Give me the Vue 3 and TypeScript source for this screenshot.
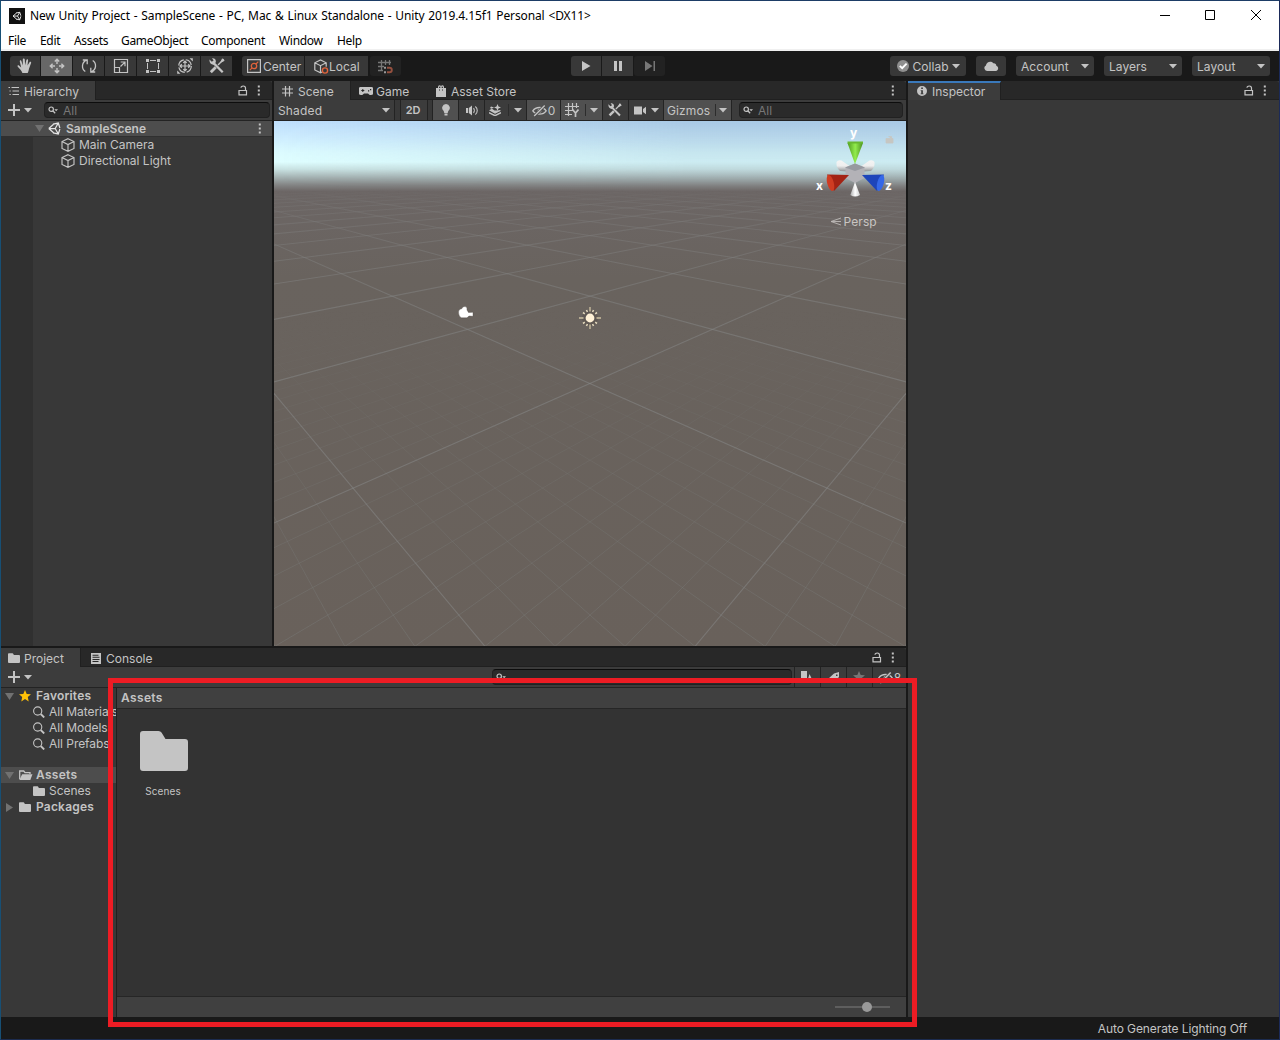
<script setup lang="ts">
import { h, type FunctionalComponent } from 'vue'

const glyphs: Record<string, string> = {
  unity: '<path d="M.8 6.500 5.600 2.300M.8 6.500l4.800 4.200M.8 6.500h6.400M7.200 6.500 10.200 1.300M7.200 6.500l3 5.200M5 2.200l5.300-1.100 1.600 4.900M5 10.800l5.300 1.100 1.600-4.900" fill="none" stroke="currentColor" stroke-width="1.250"/>',
  hand: '<path d="M5.400 15c-.5-1.600-2-3.400-3.300-4.700L.6 8.600C.1 7.700 1.300 7 2 7.500l2.200 1.900L2.800 3.500C2.600 2.200 4.100 1.900 4.400 3.100l1.400 4.300L5.800 1.400c0-1.200 1.900-1.200 2 0l.3 5.800 1.300-5.300c.3-1.200 1.900-.9 1.700.4l-.6 5.300 2-3.300c.6-1 2-.4 1.600.7l-2.100 5.700c-.3 1.800-.8 3.200-1.300 4.300z" fill="currentColor"/>',
  move: '<path d="M8 6V1.500M8 10v4.500M6 8H1.500M10 8h4.500M5.800 3.600 8 1.300l2.200 2.300M5.800 12.400 8 14.700l2.200-2.300M3.600 5.800 1.300 8l2.300 2.200M12.400 5.800 14.700 8l-2.300 2.200" fill="none" stroke="currentColor" stroke-width="1.400"/>',
  rotate: '<path d="M4.300 13.500C.2 10.700.5 4.300 5.600 2.200M1.800 2h4.400v4.200M11.700 2.500c4.100 2.800 3.800 9.200-1.300 11.300M14.200 14H9.800V9.800" fill="none" stroke="currentColor" stroke-width="1.300"/>',
  scale: '<path d="M1.500 1.500h13v13h-13zM1.500 9.500h5v5M7.500 8.500l4.200-4.200M7.700 4h4.300v4.300" fill="none" stroke="currentColor" stroke-width="1.200"/>',
  rect: '<path d="M5 2.500h6M5 13.500h6M2.500 5v6M13.500 5v6" fill="none" stroke="currentColor" stroke-width="1"/><path d="M1 1h3v3H1zM12 1h3v3h-3zM1 12h3v3H1zM12 12h3v3h-3z" fill="currentColor"/>',
  transform: '<circle cx="8" cy="8" r="6.300" fill="none" stroke="currentColor" stroke-width="1.200" stroke-dasharray="7.900 2"/><path d="M8 3v10M3 8h10M6.300 4.800 8 3l1.700 1.800M6.300 11.200 8 13l1.700-1.800M4.800 6.300 3 8l1.800 1.700M11.200 6.300 13 8l-1.800 1.700" fill="none" stroke="currentColor" stroke-width="1.200"/><path d="M12.500.2h3.300v3.300zM.2 12.500v3.300h3.300z" fill="currentColor"/>',
  tools: '<path d="M3.900 4.400 13.700 14.300" stroke="currentColor" stroke-width="2.300"/><path d="M.5 1.400l2.300 2.300L4.600 2.500 3 .3c2.300-.4 4.200 1 3.800 3.900L4.700 6.700C2.200 7 0 4.400.5 1.400z" fill="currentColor"/><path d="M14.700 1.200 9 6.900" stroke="currentColor" stroke-width="1.400"/><path d="M6.700 9.300 1.800 14.200" stroke="currentColor" stroke-width="2.800"/><path d="M13.200.3l2.500 2.500-3.300 1.800-.9-.9z" fill="currentColor"/>',
  center: '<path d="M.6.600h12.800v12.800H.6z" fill="none" stroke="currentColor" stroke-width="1.200"/><circle cx="7" cy="7" r="2.700" fill="none" stroke="#e0633c" stroke-width="1.300"/><path d="m2.800 11.200 2.300-2.300M9 5l2.300-2.300" stroke="#e0633c" stroke-width="1.200"/>',
  cube: '<path d="M7 .7 13 3.500v7L7 13.300 1 10.500v-7zM1 3.500l6 3 6-3M7 6.500v6.800" fill="none" stroke="currentColor" stroke-width="1.150"/>',
  local: '<path d="M8 13 6.500 13.800.8 11V3.800L6.500 1l5.700 2.800v4M.8 3.800l5.700 2.900 5.700-2.900M6.500 6.700v7" fill="none" stroke="currentColor" stroke-width="1.200"/><circle cx="11" cy="11.500" r="2.600" fill="none" stroke="#e0633c" stroke-width="1.400"/>',
  snap: '<path d="M3.500 1v11M7.500 1v5M11.500 1v5M0 3.500h13M0 7.500h6M0 11.500h5" fill="none" stroke="#777" stroke-width="1.300"/><path d="M9 8.700h2.500a2.300 2.300 0 0 1 0 4.600H9" fill="none" stroke="#95503f" stroke-width="1.900"/><path d="M6 7.700h2v2H6zM6 12.300h2v2H6z" fill="#999"/>',
  list: '<path d="M3.500 1.500H11M4.500 5H11M4.500 8.500H11" stroke="currentColor" stroke-width="1.200"/><path d="M.5 1.500H2M1.500 5h1.200M1.500 8.500h1.200" stroke="currentColor" stroke-width="1.200"/>',
  lock: '<path d="M1 5.500h7.500v4.300H1zM7.500 5.500V3c0-2.600-4.500-2.600-4.500-.3" fill="none" stroke="currentColor" stroke-width="1.200"/>',
  dots: '<path d="M.8.5h2v2h-2zM.8 4.500h2v2h-2zM.8 8.500h2v2h-2z" fill="currentColor"/>',
  search: '<circle cx="3.200" cy="3.200" r="2.200" fill="none" stroke="currentColor" stroke-width="1.200"/><path d="m4.800 4.800 2.400 2.400" stroke="currentColor" stroke-width="1.300"/><path d="M6.300 3.200H10L8.150 5.200z" fill="currentColor"/>',
  lens: '<circle cx="4.700" cy="5" r="4.100" fill="none" stroke="currentColor" stroke-width="1.100"/><path d="m7.700 8 3.500 3.500" stroke="currentColor" stroke-width="1.800"/>',
  grid: '<path d="M3.500 0v10.500M7.500 0v10.500M0 3H11M0 7H11" stroke="currentColor" stroke-width="1.200"/>',
  pad: '<path fill-rule="evenodd" d="M3.500 0h7a3.500 3.500 0 0 1 1.500 8c-1.500.5-2.200-.8-3-1.500H5C4.200 7.200 3.500 8.500 2 8A3.900 3.900 0 0 1 3.500 0zM3.300 1.900v1H2.300v1h1v1h1v-1h1v-1h-1v-1zM9 3.200h1.200v1.200H9zM11 2h1.200v1.200H11z" fill="currentColor"/>',
  bag: '<path fill-rule="evenodd" d="M0 3h2V2.500C2 1.200 2.700.3 3.500.3c.7 0 1 .2 1.500.6.500-.4.800-.6 1.500-.6C7.300.3 8 1.200 8 2.500V3h2v9H0zM3 3h1.300V1.500C3.500 1.300 3 2 3 3zm2.700 0H7c0-1-.5-1.700-1.300-1.500zM3 4.500v1h1v-1zm3 0v1h1v-1z" fill="currentColor"/>',
  info: '<path fill-rule="evenodd" d="M5 0a5 5 0 1 0 0 10A5 5 0 0 0 5 0zM4.200 1.600h1.700v1.500H4.200zM3.700 4.200h2.200v3.200h.6v.9H3.600v-.9h.6V5h-.5z" fill="currentColor"/>',
  bulb: '<path d="M4 0a3.900 3.900 0 0 1 2.300 7L5.700 9H2.300l-.6-2A3.900 3.900 0 0 1 4 0zM2.500 9.500h3v2h-3z" fill="currentColor"/>',
  audio: '<path d="M0 3h2v5H0zM2.800 3 6 .5v10L2.800 8z" fill="currentColor"/><path d="M7.500 3.200c1.100 1.200 1.100 3.400 0 4.600M9.300 1.500c2.600 2 2.600 6 0 8" fill="none" stroke="currentColor" stroke-width="1.100"/>',
  fx: '<path d="M0 6.200l3-1.400 2.500 1.700 3.200.1L10.500 6l1.500.8L6 9.700z" fill="currentColor"/><path d="m0 8.700 6 3 6-3" fill="none" stroke="currentColor" stroke-width="1.400"/><path d="m8.500 0 1 2.600 2.500.9-2.500 1-1 2.500-1-2.500-2.500-1 2.500-.9zM2 2.500l3 1-2.500 1.300L1 4z" fill="currentColor"/>',
  hidden: '<path d="M.8 6.800C3.800 2.400 11.200 2.400 14.200 6.800 11.200 11.200 3.800 11.200.8 6.800z" fill="none" stroke="currentColor" stroke-width="1.300"/><circle cx="7.500" cy="6.800" r="2" fill="currentColor"/><path d="M2.200 12 12.700 1.500" stroke="#4a4a4a" stroke-width="3"/><path d="M2.200 12 12.700 1.500" stroke="currentColor" stroke-width="1.400"/>',
  gridy: '<path d="M3.500 0v13M7.500 0v8M11.500 0v5M0 3.500h14M0 7.500h7M0 11.500h7" fill="none" stroke="currentColor" stroke-width="1.200"/><path d="M7.500 6.500 10.500 10l3-3.500M10.500 9.500V14" fill="none" stroke="currentColor" stroke-width="1.700"/>',
  camera: '<path d="M0 .5h8v8H0zM9 3l3-2.300v7.600L9 6z" fill="currentColor"/>',
  folder: '<path d="M0 1.200Q0 .3.800.3h3.700q.6 0 .8.600l.6 1.200H11q1 0 1 1v5.800q0 1-1 1H1q-1 0-1-1z" fill="currentColor"/>',
  open: '<path d="M.7 9V1h4l1.300 1.700h5V4" fill="none" stroke="currentColor" stroke-width="1.300"/><path d="M3.200 4.200h10.300L11.300 10H.3z" fill="currentColor"/>',
  star: '<path d="m6 0 1.700 3.900 4.300.4-3.200 2.800.9 4.300L6 9.100l-3.700 2.300.9-4.300L0 4.300l4.300-.4z" fill="currentColor"/>',
  console: '<path fill-rule="evenodd" d="M0 0h10v11H0zM1.500 1.700v1h6v-1zM1.500 3.800v1h7v-1zM1.500 5.900v1h7v-1zM1.500 8v1h6V8z" fill="currentColor"/>',
  check: '<circle cx="6" cy="6" r="6" fill="#8f8f8f"/><path d="m2.800 5.800 2.400 2.400L9.600 3.600" fill="none" stroke="#fff" stroke-width="1.900"/>',
  cloud: '<path d="M3 10A3 3 0 0 1 1.900 4.400C2.400 1 6.900-.9 9.300 2.200c2-.3 3.200 1 3 2.600C15 5.500 14.700 10 11.700 10z" fill="currentColor"/>',
  play: '<path d="M0 0v10l8.500-5z" fill="currentColor"/>',
  pause: '<path d="M0 0h3v10H0zM5 0h3v10H5z" fill="currentColor"/>',
  step: '<path d="M0 0v10l7.500-5zM8.500 0H10v10H8.500z" fill="currentColor"/>',
  plus: '<path d="M6 0v12M0 6h12" stroke="currentColor" stroke-width="2"/>',
  down: '<path d="M0 0h8L4 4.500z" fill="currentColor"/>',
  fold: '<path d="M0 0h9L4.500 7z" fill="currentColor"/>',
  foldr: '<path d="M0 0v9l7-4.500z" fill="currentColor"/>',
  shapes: '<path d="M0 0h6v7H0zM8.500 3l4 8.500H6z" fill="currentColor"/><circle cx="3" cy="9" r="3" fill="currentColor"/>',
  tag: '<path fill-rule="evenodd" d="M0 7 6 1.500 11 0v5L5 11zM8 2.500V4h1.500V2.500z" fill="currentColor"/>',
}

const Ic: FunctionalComponent<{ n: string; w: number; h: number; vw?: number; vh?: number }> = (p) =>
  h('svg', {
    width: p.w,
    height: p.h,
    viewBox: `0 0 ${p.vw ?? p.w} ${p.vh ?? p.h}`,
    style: 'display:block;flex:none',
    innerHTML: glyphs[p.n],
  })
Ic.props = ['n', 'w', 'h', 'vw', 'vh']

const menus = [
  ['File', 32], ['Edit', 34], ['Assets', 47], ['GameObject', 80], ['Component', 78], ['Window', 58], ['Help', 30],
] as const
const tools = ['hand', 'move', 'rotate', 'scale', 'rect', 'transform', 'tools']

/* Ground grid: two families of lines converging at symmetric vanishing points. */
const HORIZON = 36
const MID = 316
const SPREAD = 513
const BASE = 0.004415
const STEP = 0.00277
interface Seg { x1: number; y1: number; x2: number; y2: number }
function family(n: number): Seg[] {
  const inv = BASE + n * (n < 0 ? 0.00279 : STEP)
  const slope = 1 / inv / SPREAD
  const far = MID + SPREAD + 400
  const y2 = HORIZON + slope * (far - MID + SPREAD)
  return [
    { x1: MID - SPREAD, y1: HORIZON, x2: far, y2 },
    { x1: MID + SPREAD, y1: HORIZON, x2: 2 * MID - far, y2 },
  ]
}
const major: Seg[] = []
for (let i = -1; i < 22; i++) major.push(...family(i))
const minor: Seg[] = []
for (let i = -15; i < 34; i++) if (i % 10 !== 0) minor.push(...family(i / 10))
</script>

<template>
  <div class="win">
    <header class="title">
      <svg class="logo" width="16" height="16" viewBox="0 0 16 16"><rect width="16" height="16" fill="#111" /><g transform="translate(3.500 3.500) scale(.7)" color="#fff" v-html="glyphs.unity" /></svg>
      <span class="caption">New Unity Project - SampleScene - PC, Mac &amp; Linux Standalone - Unity 2019.4.15f1 Personal &lt;DX11&gt;</span>
      <svg class="winbtns" width="102" height="12" viewBox="0 0 102 12" fill="none" stroke="#000"><path d="M0 5.500h10M45.500.5h9v9h-9zM91 0l10 10M101 0 91 10" /></svg>
    </header>
    <nav class="menu"><span v-for="m in menus" :key="m[0]" :style="{ width: m[1] + 'px' }">{{ m[0] }}</span></nav>

    <div class="toolbar">
      <div class="group tools">
        <button v-for="t in tools" :key="t" :class="{ on: t === 'move' }"><Ic :n="t" :w="16" :h="16" /></button>
      </div>
      <div class="group pivot">
        <button class="pv"><Ic n="center" :w="14" :h="14" /><span>Center</span></button>
        <button class="pv loc"><Ic n="local" :w="15" :h="15" /><span>Local</span></button>
        <button class="dim"><Ic n="snap" :w="15" :h="15" /></button>
      </div>
      <div class="group playbar">
        <button><Ic n="play" :w="9" :h="10" /></button>
        <button><Ic n="pause" :w="8" :h="10" /></button>
        <button class="dim"><Ic n="step" :w="10" :h="10" /></button>
      </div>
      <div class="services">
        <button class="collab"><Ic n="check" :w="12" :h="12" /><span>Collab</span><Ic n="down" :w="8" :h="5" /></button>
        <button class="cloud"><Ic n="cloud" :w="15" :h="10" /></button>
        <button v-for="d in ['Account', 'Layers', 'Layout']" :key="d" class="drop"><span>{{ d }}</span><Ic n="down" :w="8" :h="5" /></button>
      </div>
    </div>

    <main>
      <div class="left">
        <div class="upper">
          <section class="hier">
            <div class="tabs">
              <div class="tab act" style="width: 95px"><Ic class="hi" n="list" :w="12" :h="10" /><span>Hierarchy</span></div>
              <div class="ends"><Ic n="lock" :w="10" :h="11" /><Ic n="dots" :w="4" :h="11" /></div>
            </div>
            <div class="bar">
              <span class="plus"><Ic n="plus" :w="12" :h="12" /><Ic n="down" :w="8" :h="5" /></span>
              <div class="search hs"><Ic n="search" :w="10" :h="8" /><span>All</span></div>
            </div>
            <div class="tree">
              <div class="scene-row"><Ic class="tri" n="fold" :w="9" :h="7" /><Ic class="white" n="unity" :w="13" :h="13" /><b>SampleScene</b><Ic class="more" n="dots" :w="4" :h="11" /></div>
              <div class="objs">
                <div v-for="o in ['Main Camera', 'Directional Light']" :key="o" class="obj"><Ic n="cube" :w="14" :h="14" /><span>{{ o }}</span></div>
              </div>
            </div>
          </section>

          <section class="scene">
            <div class="tabs">
              <div class="tab act" style="width: 77px"><Ic n="grid" :w="11" :h="11" /><span>Scene</span></div>
              <div class="tab" style="width: 77px"><Ic n="pad" :w="14" :h="8" /><span class="t3">Game</span></div>
              <div class="tab"><Ic n="bag" :w="10" :h="12" /><span>Asset Store</span></div>
              <div class="ends"><Ic n="dots" :w="4" :h="11" /></div>
            </div>
            <div class="bar sbar">
              <span class="c shaded"><span>Shaded</span><Ic n="down" :w="8" :h="5" /></span>
              <span class="c gap" style="width: 6px" />
              <span class="c twod" style="width: 27px"><b>2D</b></span>
              <span class="c gap" style="width: 5px" />
              <span class="c on" style="width: 26px"><Ic n="bulb" :w="8" :h="12" /></span>
              <span class="c" style="width: 26px"><Ic n="audio" :w="12" :h="11" /></span>
              <span class="c split" style="width: 42px"><Ic n="fx" :w="12" :h="12" /><i /><Ic n="down" :w="8" :h="5" /></span>
              <span class="c on" style="width: 34px; gap: 1px"><Ic n="hidden" :w="15" :h="13" /><span>0</span></span>
              <span class="c split on" style="width: 42px"><Ic n="gridy" :w="14" :h="14" /><i /><Ic n="down" :w="8" :h="5" /></span>
              <span class="c wr" style="width: 26px"><Ic n="tools" :w="14" :h="14" :vw="16" :vh="16" /></span>
              <span class="c" style="width: 35px; gap: 4px"><Ic n="camera" :w="13" :h="9" /><Ic n="down" :w="8" :h="5" /></span>
              <span class="c split on giz" style="width: 69px"><span>Gizmos</span><i /><Ic n="down" :w="8" :h="5" /></span>
              <div class="search ss"><Ic n="search" :w="10" :h="8" /><span>All</span></div>
            </div>
            <svg class="view" width="632" height="525" viewBox="0 0 632 525">
              <defs>
                <linearGradient id="sky" x1="0" y1="0" x2="0" y2="1">
                  <stop offset="0" stop-color="#bfdffd" /><stop offset=".033" stop-color="#cfeeff" /><stop offset=".06" stop-color="#dcfbff" /><stop offset=".078" stop-color="#dffeff" /><stop offset=".092" stop-color="#c9e2e2" /><stop offset=".107" stop-color="#a5b3b3" /><stop offset=".122" stop-color="#838484" /><stop offset=".134" stop-color="#6c6665" /><stop offset=".3" stop-color="#69635e" /><stop offset="1" stop-color="#69615b" />
                </linearGradient>
                <linearGradient id="tint" x1="0" y1="0" x2="1" y2="0">
                  <stop offset="0" stop-color="#88a8c0" stop-opacity="0" /><stop offset=".65" stop-color="#88a8c0" stop-opacity=".4" /><stop offset="1" stop-color="#88a8c0" stop-opacity=".4" />
                </linearGradient>
                <linearGradient id="down" x1="0" y1="0" x2="0" y2="1"><stop offset="0" stop-color="#fff" /><stop offset=".6" stop-color="#888" /><stop offset="1" stop-color="#000" /></linearGradient>
                <mask id="mt"><rect width="632" height="67" fill="url(#down)" /></mask>
                <linearGradient id="fa" gradientUnits="userSpaceOnUse" x1="0" y1="0" x2="0" y2="525">
                  <stop offset=".13" stop-color="#000" /><stop offset=".16" stop-color="#666" /><stop offset=".22" stop-color="#999" /><stop offset=".34" stop-color="#ddd" /><stop offset=".5" stop-color="#fff" /><stop offset="1" stop-color="#fff" />
                </linearGradient>
                <linearGradient id="fi" gradientUnits="userSpaceOnUse" x1="0" y1="0" x2="0" y2="525">
                  <stop offset=".36" stop-color="#000" /><stop offset=".6" stop-color="#777" /><stop offset="1" stop-color="#fff" />
                </linearGradient>
                <mask id="ma" maskUnits="userSpaceOnUse" x="0" y="0" width="632" height="525"><rect width="632" height="525" fill="url(#fa)" /></mask>
                <mask id="mi" maskUnits="userSpaceOnUse" x="0" y="0" width="632" height="525"><rect width="632" height="525" fill="url(#fi)" /></mask>
                <linearGradient id="cy"><stop offset="0" stop-color="#4f9b20" /><stop offset=".5" stop-color="#92ec4c" /><stop offset="1" stop-color="#4b8f22" /></linearGradient>
                <linearGradient id="cw"><stop offset="0" stop-color="#aaa" /><stop offset=".5" stop-color="#fff" /><stop offset="1" stop-color="#ccc" /></linearGradient>
                <linearGradient id="cs" x1="0" y1="0" x2="0" y2="1"><stop offset="0" stop-color="#f4f4f4" /><stop offset=".5" stop-color="#eee" /><stop offset="1" stop-color="#8f9294" /></linearGradient>
              </defs>
              <rect width="632" height="525" fill="url(#sky)" />
              <rect width="632" height="67" fill="url(#tint)" mask="url(#mt)" />
              <g mask="url(#mi)" stroke="#7b7f7c" stroke-opacity=".42" stroke-width="1"><line v-for="(s, i) in minor" :key="i" v-bind="s" /></g>
              <g mask="url(#ma)" stroke="#8a8c8b" stroke-opacity=".5" stroke-width="1.100"><line v-for="(s, i) in major" :key="i" v-bind="s" /></g>
              <!-- camera gizmo -->
              <path d="M184.500 191q0-3 3.500-3.500.5-2.300 3-2 2.500.3 2 3.500l1.500 2.500 4.500-.2v4l-4-.3-2 1.800h-5.500q-3-1-3-5.800z" fill="#fff" stroke="#45403c" stroke-opacity=".45" stroke-width=".8" />
              <!-- directional light gizmo -->
              <g transform="translate(316 197)">
                <circle r="8" fill="#4c463f" fill-opacity=".35" /><circle r="4.400" fill="#fff1d6" />
                <g stroke="#b3a88f" stroke-width="1.800"><path d="M0-11v4.500M0 6.500V11M-11 0h4.500M6.500 0H11" /><path d="m-7-5.500 1.800 1.300M7-5.500 5.200-4.200M-7 5.500l1.800-1.300M7 5.500 5.200 4.200M-3.500-8l.9 2M3.500-8l-.9 2M-3.500 8l.9-2M3.500 8l-.9-2" stroke="#e0d5ba" stroke-width="1.600" /></g>
              </g>
              <!-- orientation gizmo -->
              <path d="M562.500 41q1.500-2.500 5-1.500l8 5.500-2 5.500-7.500-.5q-4-3-3.500-9z" fill="url(#cs)" /><path d="M600.500 41q-1.500-2.500-5-1.500l-8 5.500 2 5.500 7.500-.5q4-3 3.500-9z" fill="url(#cs)" />
              <path d="m581 42.500 9.500 4V57l-9.500 5-9.500-5V46.500z" fill="#b3b2b7" /><path d="m581 42.500 10 4-10 3.500-10-3.500z" fill="#9799a0" />
              <path d="m573.500 22 7.500 21 8-21z" fill="url(#cy)" /><path d="M573.500 20.500h15.500v2h-15.500z" fill="#67b82f" />
              <path d="m581 61-4.700 13q4.700 3 9.700 0z" fill="url(#cw)" />
              <path d="m575 54-22-.5 7 16.500z" fill="#a32314" /><ellipse cx="556.500" cy="62" rx="3.300" ry="8.200" transform="rotate(-15 556.500 62)" fill="#cf3c22" />
              <path d="m588 54 22-.5-7 16.500z" fill="#1d45ba" /><ellipse cx="606.500" cy="62" rx="3.300" ry="8.200" transform="rotate(15 606.500 62)" fill="#3568e8" />
              <g class="axis"><text x="576" y="16">y</text><text x="542" y="69">x</text><text x="611" y="69">z</text></g>
              <path d="M612 17.500h7v4.500h-7zM617.500 18v-2.500h-3" fill="#c6c6c2" stroke="#c6c6c2" stroke-width=".8" />
              <path d="M567 97 557 100.500l10 3.500M557 100.500h10" fill="none" stroke="#bdbab8" stroke-width=".9" />
              <text class="persp" x="569.500" y="105">Persp</text>
            </svg>
          </section>
        </div>

        <section class="project">
          <div class="tabs">
            <div class="tab act" style="width: 80px"><Ic n="folder" :w="12" :h="10" /><span class="t4">Project</span></div>
            <div class="tab con"><Ic n="console" :w="10" :h="11" /><span>Console</span></div>
            <div class="ends"><Ic n="lock" :w="10" :h="11" /><Ic n="dots" :w="4" :h="11" /></div>
          </div>
          <div class="bar pbar">
            <span class="plus"><Ic n="plus" :w="12" :h="12" /><Ic n="down" :w="8" :h="5" /></span>
            <div class="search ps"><Ic n="search" :w="10" :h="8" /></div>
            <span class="c" style="width: 26px"><Ic n="shapes" :w="13" :h="12" /></span>
            <span class="c" style="width: 26px"><Ic n="tag" :w="11" :h="11" /></span>
            <span class="c grey" style="width: 26px"><Ic n="star" :w="12" :h="12" /></span>
            <span class="c" style="width: 34px; gap: 1px"><Ic n="hidden" :w="15" :h="13" /><span>8</span></span>
          </div>
          <div class="pbody">
            <div class="ptree">
              <div class="row"><Ic class="tri" n="fold" :w="9" :h="7" /><Ic class="gold" n="star" :w="12" :h="12" /><b>Favorites</b></div>
              <div v-for="f in ['All Materials', 'All Models', 'All Prefabs']" :key="f" class="row sub"><Ic n="lens" :w="12" :h="12" /><span>{{ f }}</span></div>
              <div class="row sel"><Ic class="tri" n="fold" :w="9" :h="7" /><Ic n="open" :w="14" :h="11" /><b>Assets</b></div>
              <div class="row sub"><Ic n="folder" :w="12" :h="10" /><span>Scenes</span></div>
              <div class="row pk"><Ic class="tri" n="foldr" :w="7" :h="9" /><Ic n="folder" :w="12" :h="10" /><b>Packages</b></div>
            </div>
            <div class="assets">
              <div class="crumb"><b>Assets</b></div>
              <div class="items">
                <div class="item">
                  <svg width="48" height="40" viewBox="0 0 48 40"><path d="M0 3q0-3 3-3h15.500q2 0 3 1.500L25.500 8H45q3 0 3 3v26q0 3-3 3H3q-3 0-3-3z" fill="#c4c4c4" /></svg>
                  <span>Scenes</span>
                </div>
              </div>
              <div class="foot"><div class="slider"><i /></div></div>
            </div>
          </div>
        </section>
      </div>

      <section class="insp">
        <div class="tabs">
          <div class="tab act blue" style="width: 93px"><Ic n="info" :w="10" :h="10" /><span>Inspector</span></div>
          <div class="ends"><Ic n="lock" :w="10" :h="11" /><Ic n="dots" :w="4" :h="11" /></div>
        </div>
      </section>
    </main>
    <footer class="status"><span>Auto Generate Lighting Off</span></footer>
    <div class="frame" />
  </div>
</template>

<style>
body { margin: 0; background: #191919; }
</style>
<style scoped>
* { box-sizing: border-box; }
.win { position: relative; width: 1280px; height: 1040px; display: flex; flex-direction: column; border: 1px solid; border-color: #1d3d66 #1b2a59 #1c2c50 #174f74; background: #191919; font: 12px/16px Inter, sans-serif; letter-spacing: 0; color: #c4c4c4; overflow: hidden; white-space: nowrap; }
.title { height: 29px; flex: none; display: flex; align-items: center; background: #fff; color: #000; padding-left: 8px; }
.caption { margin-left: 5px; font: 12px/16px "Noto Sans", "Noto Sans CJK KR", sans-serif; letter-spacing: -.12px; word-spacing: .85px; }
.winbtns { margin-left: auto; margin-right: 17px; }
.menu { height: 21px; flex: none; display: flex; padding-left: 7px; background: #fff; color: #000; border-bottom: 2px solid #f0f0f0; font: 12px/22px "Noto Sans", sans-serif; letter-spacing: -.3px; }
.menu span { flex: none; }
.toolbar { height: 30px; flex: none; display: flex; padding: 5px 9px 5px 9px; }
button { font: inherit; letter-spacing: inherit; color: inherit; border: 0; margin: 0; padding: 0; height: 20px; background: #383838; display: flex; align-items: center; justify-content: center; }
button span { padding-top: 2px; }
.group { display: flex; gap: 1px; }
.group button { width: 31px; }
.group button:first-child { border-radius: 3px 0 0 3px; }
.tools button:first-child, .playbar button:first-child { width: 30px; }
.tools button.on { background: #676767; }
.pivot { margin-left: 10px; }
.group button.pv { width: 62px; justify-content: flex-start; padding-left: 5px; gap: 2px; letter-spacing: 0; }
.group button.loc { width: 63px; padding-left: 9px; gap: 0; }
.group button.dim { background: #222; border-radius: 3px; color: #777; }
.pivot .dim { margin-left: 1px; }
.playbar { margin-left: 170px; }
.services { margin-left: auto; display: flex; gap: 10px; letter-spacing: .05px; }
.services button { border-radius: 3px; }
.collab { width: 76px; gap: 3px; padding-left: 1px; }
.cloud { width: 30px; }
.services .drop { width: 78px; justify-content: space-between; padding: 0 5px; }
main { display: flex; gap: 2px; height: 936px; flex: none; }
.left { width: 905px; display: flex; flex-direction: column; gap: 2px; }
.upper { display: flex; gap: 2px; height: 565px; flex: none; }
.hier { width: 271px; background: #383838; display: flex; flex-direction: column; }
.scene { width: 632px; display: flex; flex-direction: column; background: #3c3c3c; }
.insp { width: 371px; background: #383838; }
.tabs { height: 19px; flex: none; display: flex; background: #282828; border-bottom: 1px solid #202020; border-radius: 3px 3px 0 0; }
.tab { display: flex; align-items: center; padding: 3px 0 0 8px; gap: 5px; height: 19px; }
.tab > svg { position: relative; top: -1px; }
.tab.act { background: #3c3c3c; border-right: 1px solid #202020; }
.tab.blue { border-top: 2px solid #3a79bb; padding-top: 1px; padding-left: 9px; }
.hier .tab.act { padding-left: 7px; }
.hi { margin-right: -1px; }
.t3 { margin-left: -2px; }
.t4 { margin-left: -1px; }
.project .tab.act { padding-left: 7px; }
.con { padding-left: 10px; }
.ends { margin-left: auto; margin-right: 11px; display: flex; align-items: center; gap: 9px; }
.insp .ends { margin-right: 12px; }
.bar { height: 21px; flex: none; background: #3c3c3c; display: flex; border-bottom: 1px solid #232323; }
.hier .bar { height: 20px; border-bottom: 0; }
.plus { display: flex; align-items: center; gap: 4px; margin-left: 7px; width: 24px; height: 20px; }
.search { display: flex; align-items: center; gap: 5px; height: 16px; margin-top: 2px; background: #2a2a2a; border: 1px solid #212121; border-top-color: #0d0d0d; border-radius: 4px; color: #c4c4c4; padding-left: 3px; }
.search span { color: #777; padding-top: 1px; }
.hs { width: 226px; margin-left: 12px; }
.ss { width: 164px; margin-left: 7px; }
.ps { width: 300px; margin-left: 460px; margin-right: 2px; }
.c { display: flex; align-items: center; justify-content: center; height: 20px; flex: none; border-left: 1px solid #232323; }
.c > span { padding-top: 1px; }
.c.on { background: #505050; }
.c.gap { background: #383838; }
.c.wr { padding-right: 2px; }
.shaded { width: 120px; border-left: 0; justify-content: space-between; padding: 0 4px; letter-spacing: .15px; }
.twod { padding-right: 2px; }
.twod b { font-size: 11px; font-weight: 600; letter-spacing: -.2px; }
.split { justify-content: space-between; padding: 0 4px; }
.split i { width: 1px; height: 12px; background: #2c2c2c; margin-right: -1px; }
.giz { border-right: 1px solid #232323; padding: 0 4px 0 3px; letter-spacing: .1px; }
.grey { color: #777; padding-right: 2px; }
.tree { flex: 1; border-top: 1px solid #232323; display: flex; flex-direction: column; background: #383838; }
.scene-row { height: 16px; flex: none; background: #4d4d4d; display: flex; align-items: center; padding-left: 34px; border-bottom: 1px solid #303030; }
.scene-row b { margin-left: 5px; letter-spacing: .05px; }
.tri { color: #717171; margin-right: 4px; }
.white { color: #e4e4e4; }
.more { margin-left: auto; margin-right: 10px; }
b { font-weight: 600; letter-spacing: .1px; }
.objs { flex: 1; border-left: 32px solid #303030; }
.obj { height: 16px; display: flex; align-items: center; gap: 4px; padding-left: 28px; }
.view { display: block; flex: none; }
.axis { font: bold 12px Inter, sans-serif; fill: #fff; letter-spacing: 0; }
.persp { font: 12px Inter, sans-serif; fill: #c8c5c2; letter-spacing: .1px; }
.project { height: 369px; display: flex; flex-direction: column; background: #383838; }
.pbody { flex: 1; display: flex; }
.ptree { width: 116px; border-right: 1px solid #202020; overflow: hidden; }
.row { height: 16px; display: flex; align-items: center; padding-left: 4px; gap: 5px; }
.row .tri { margin-right: 0; }
.row b { margin-left: -1px; letter-spacing: .2px; }
.row .gold { color: #ffc107; }
.row .gold + b { margin-left: 0; }
.row.sub { padding-left: 32px; gap: 4px; letter-spacing: -.05px; }
.row.sel { margin-top: 15px; background: #4d4d4d; }
.row.pk { gap: 6px; padding-left: 5px; }
.row.sel svg + svg { margin-right: -1px; }
.row.sel b { letter-spacing: .3px; }
.assets { flex: 1; display: flex; flex-direction: column; background: #333; }
.crumb { height: 21px; background: #404040; border-bottom: 1px solid #262626; padding: 2px 0 0 4px; }
.crumb b { letter-spacing: .35px; }
.items { flex: 1; padding: 22px 0 0 23px; }
.item { width: 48px; display: flex; flex-direction: column; align-items: center; font-size: 10px; letter-spacing: .1px; }
.item span { margin-top: 12px; margin-left: -2px; }
.foot { height: 21px; background: #404040; border-top: 1px solid #262626; display: flex; justify-content: flex-end; align-items: center; padding-right: 16px; }
.slider { width: 55px; height: 2px; background: #5e5e5e; display: flex; align-items: center; }
.slider i { width: 10px; height: 10px; border-radius: 50%; background: #999; margin-left: 27px; }
.status { flex: 1; display: flex; align-items: center; justify-content: flex-end; padding: 2px 32px 0 0; letter-spacing: -.09px; }
.frame { position: absolute; left: 107px; top: 677px; width: 809px; height: 349px; border: 5px solid #ed1c24; }
</style>
